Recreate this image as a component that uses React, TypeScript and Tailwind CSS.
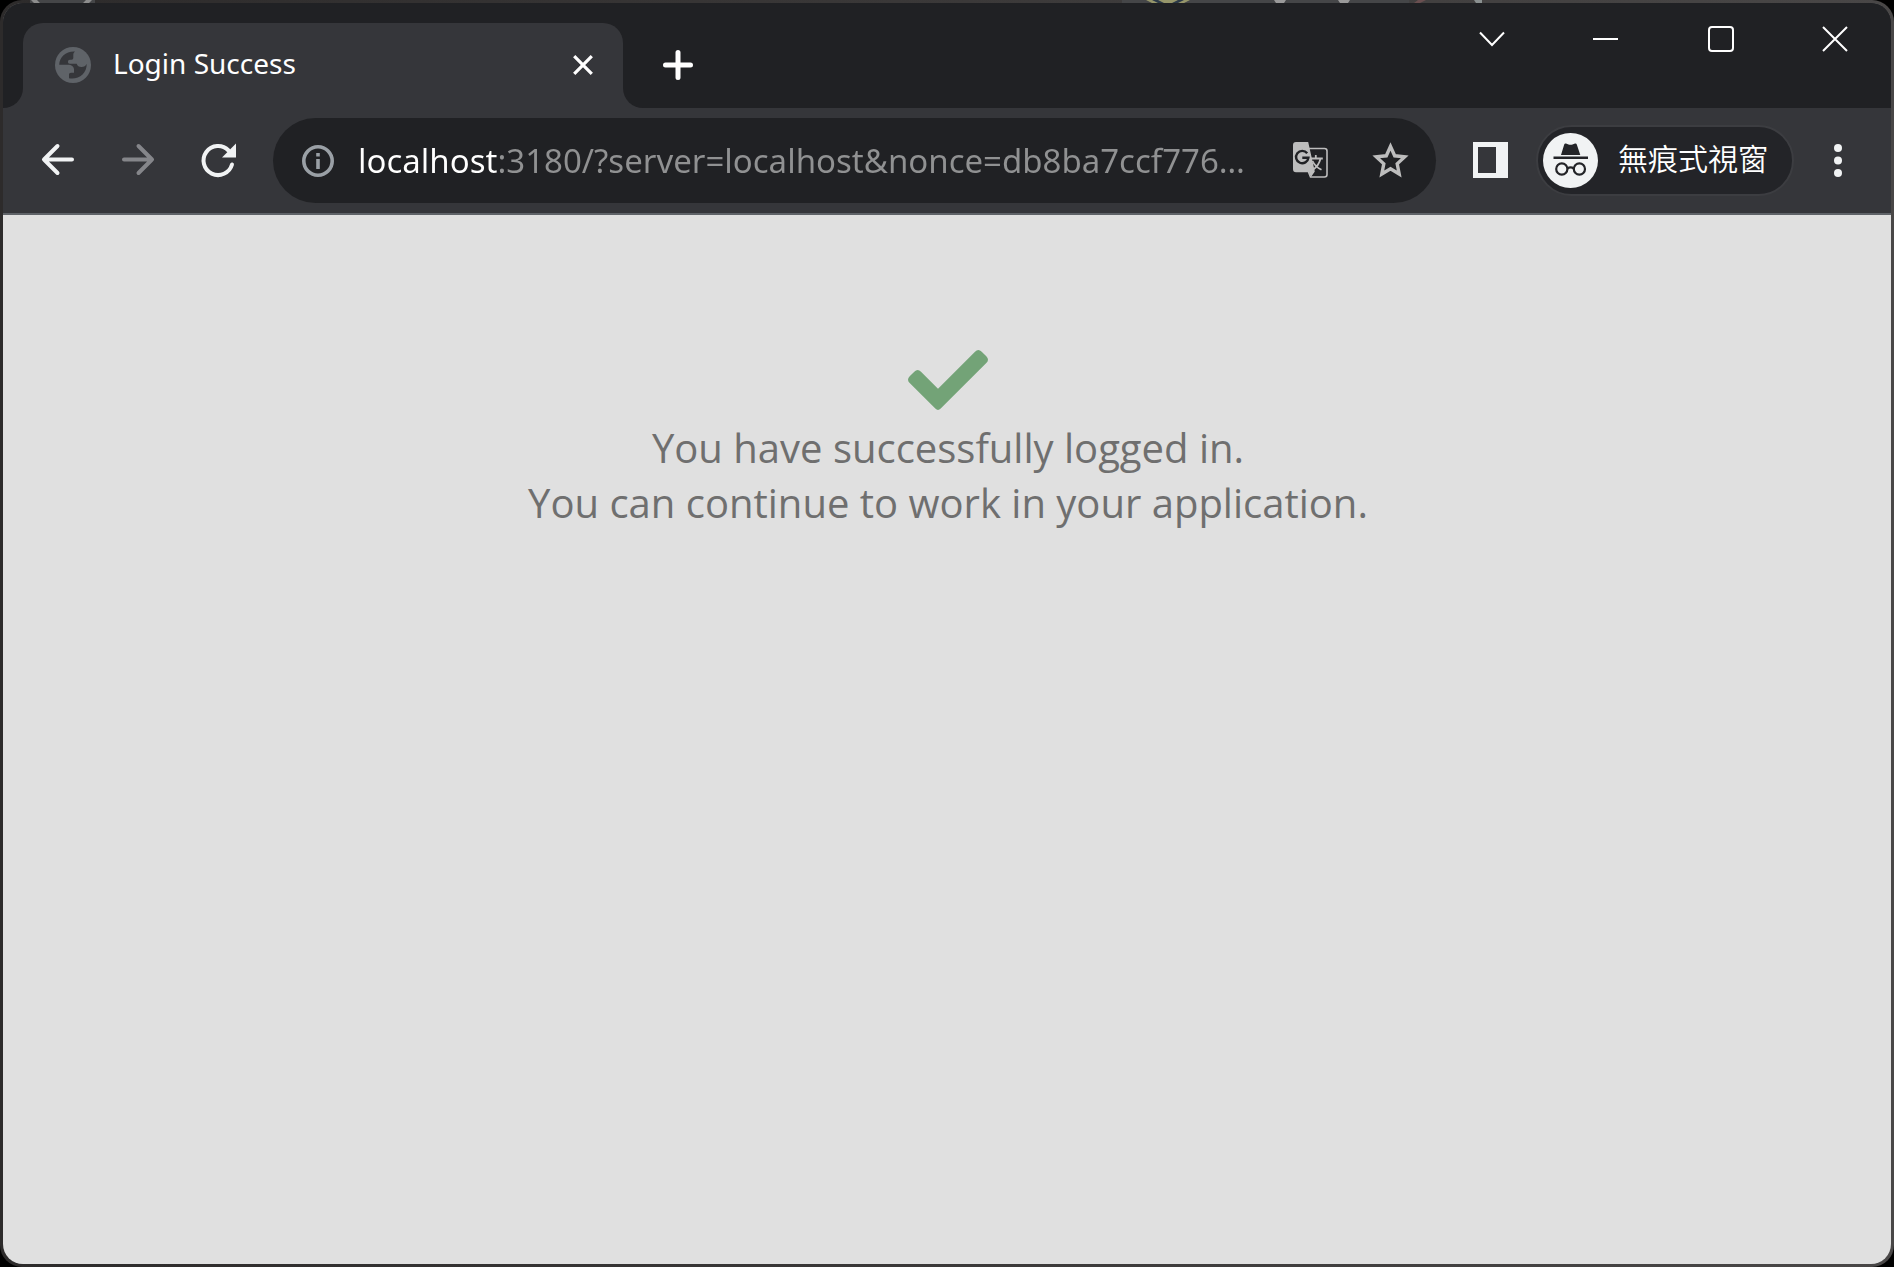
import React from "react";

function TabStrip() {
  return (
    <header className="flex h-[105px] items-end bg-[#202124]">
      <div className="flex h-full w-5 shrink-0 items-end bg-[#35363a]">
        <div className="h-full w-full rounded-br-[20px] bg-[#202124]" />
      </div>
      <div role="tablist" className="flex h-[85px] w-[600px] shrink-0 items-center rounded-t-[20px] bg-[#35363a] pr-[27px] pb-px pl-8">
        <svg aria-hidden="true" className="size-9 shrink-0" viewBox="0 0 36 36">
          <circle cx="18" cy="18" r="18" fill="#5f6368" />
          <path
            d="M20 4.500C11 4 4.500 10 4.200 17.800H13c3.400 0 6 2 6 4.700v3.300h-3c-1.300 0-2 .8-2 2v3.500c9.500 1.800 18-5 17.700-14.600-1 2.200-2.700 3.300-5.200 3.300-2.700 0-4-1.200-4.800-3.300H15c-1.600 0-2-.8-2-2s.6-2 2-2h1.500c1.300 0 1.800-.8 1.800-2V7.800c0-1.500.6-2.500 1.700-3.300z"
            fill="#35363a"
          />
        </svg>
        <button role="tab" aria-selected="true" className="ml-[22px] flex-1 pb-1 text-left font-['Noto_Sans'] text-[28px] leading-9 text-white">
          Login Success
        </button>
        <button aria-label="Close tab" className="flex size-[26px] items-center justify-center text-white">
          <svg aria-hidden="true" className="size-5" viewBox="0 0 20 20" fill="none" stroke="currentColor" strokeWidth="3.200">
            <path d="M1.200 1.200l17.600 17.600M18.800 1.200L1.200 18.800" />
          </svg>
        </button>
      </div>
      <div className="flex h-full flex-1 bg-[#35363a]">
        <div className="flex flex-1 items-end rounded-bl-[20px] bg-[#202124]">
          <button aria-label="New tab" className="ml-[30px] flex h-[85px] w-[50px] items-center justify-center pb-px text-white">
            <svg aria-hidden="true" className="size-[30px]" viewBox="0 0 30 30" fill="none" stroke="currentColor" strokeWidth="5" strokeLinecap="round">
              <path d="M15 2.500v25M2.500 15h25" />
            </svg>
          </button>
          <div className="ml-auto flex self-start text-white">
            <button aria-label="Search tabs" className="flex h-[72px] w-[114px] items-center justify-center">
              <svg aria-hidden="true" className="size-[26px]" viewBox="0 0 26 26" fill="none" stroke="currentColor" strokeWidth="2">
                <path d="M1 6.500l12 12.500 12-12.500" />
              </svg>
            </button>
            <button aria-label="Minimize" className="flex h-[72px] w-[114px] items-center justify-center">
              <svg aria-hidden="true" className="size-[26px]" viewBox="0 0 26 26" fill="currentColor">
                <path d="M0 12h25v2H0z" />
              </svg>
            </button>
            <button aria-label="Maximize" className="flex h-[72px] w-[116px] items-center justify-center">
              <svg aria-hidden="true" className="size-[26px]" viewBox="0 0 26 26" fill="none" stroke="currentColor" strokeWidth="2">
                <rect x="1" y="1" width="24" height="24" rx="3" />
              </svg>
            </button>
            <button aria-label="Close" className="flex h-[72px] w-[112px] items-center justify-center">
              <svg aria-hidden="true" className="size-[26px]" viewBox="0 0 26 26" fill="none" stroke="currentColor" strokeWidth="2">
                <path d="M1 1l24 24M25 1L1 25" />
              </svg>
            </button>
          </div>
        </div>
      </div>
    </header>
  );
}

function TranslateIcon() {
  return (
    <svg aria-hidden="true" className="h-9 w-[35px]" viewBox="0 0 35 36">
      <path d="M14 6.500h17.500a2.500 2.500 0 0 1 2.500 2.500v23.500a2.500 2.500 0 0 1-2.500 2.500H17.500l-2-5" fill="none" stroke="#bdbdbd" strokeWidth="1.600" />
      <path d="M3 0h12.200l6.600 29.500-3.800 5.500-2-4.700H3a3 3 0 0 1-3-3V3a3 3 0 0 1 3-3z" fill="#bdbdbd" />
      <path d="M14.200 11.300a6.200 6.200 0 1 0 1.200 4.500H9.300" fill="none" stroke="#202124" strokeWidth="2.400" />
      <path d="M17.500 16.500h12.300M22.800 13v3.500M19.500 19c1.800 4 4.800 6.800 9 8.800M27.500 16.800c-1.200 4.600-3.500 8.200-7.200 10.700" fill="none" stroke="#bdbdbd" strokeWidth="1.800" />
    </svg>
  );
}

function Toolbar() {
  return (
    <div className="flex h-[107px] items-center border-b-2 border-[#5f6368] bg-[#35363a] pr-[37px] pl-[35px]">
      <nav aria-label="History" className="flex shrink-0 gap-10 pb-px text-[#f1f3f4]">
        <button aria-label="Back" className="size-10">
          <svg aria-hidden="true" className="size-10" viewBox="0 0 40 40" fill="none" stroke="currentColor" strokeWidth="4" strokeLinecap="round" strokeLinejoin="round">
            <path d="M34 19.500H6M19.500 6L6 19.500 19.500 33" />
          </svg>
        </button>
        <button aria-label="Forward" className="size-10 text-[#85868a]">
          <svg aria-hidden="true" className="size-10" viewBox="0 0 40 40" fill="none" stroke="currentColor" strokeWidth="4" strokeLinecap="round" strokeLinejoin="round">
            <path d="M6 19.500h28M20.500 6L34 19.500 20.500 33" />
          </svg>
        </button>
        <button aria-label="Reload" className="size-10">
          <svg aria-hidden="true" className="size-10" viewBox="0 0 40 40">
            <path d="M30.500 10.500A14.500 14.500 0 1 0 34 24.500" fill="none" stroke="currentColor" strokeWidth="4" strokeLinecap="round" />
            <path d="M38 3.500v14H24z" fill="currentColor" />
          </svg>
        </button>
      </nav>
      <div className="ml-[35px] flex h-[85px] flex-1 items-center rounded-full bg-[#202124] pr-[27px] pl-[29px]">
        <button aria-label="View site information" className="size-8 shrink-0">
          <svg aria-hidden="true" className="size-8" viewBox="0 0 32 32" fill="none" stroke="#9aa0a6" strokeWidth="3.600">
            <circle cx="16" cy="16" r="14.200" />
            <path d="M16 14v10M16 8v3.600" />
          </svg>
        </button>
        <input
          aria-label="Address and search bar"
          readOnly
          value="localhost:3180/?server=localhost&nonce=db8ba7ccf776…"
          className="ml-6 h-12 min-w-0 flex-1 bg-[linear-gradient(90deg,#fff_139px,#909192_139px)] bg-clip-text font-['Noto_Sans'] text-[33px] text-transparent outline-none"
        />
        <button aria-label="Translate this page" className="ml-4 shrink-0 pb-px">
          <TranslateIcon />
        </button>
        <button aria-label="Bookmark this tab" className="ml-11 shrink-0 pb-px">
          <svg aria-hidden="true" className="h-9 w-[37px]" viewBox="0 0 37 36" fill="none" stroke="#bdbdbd" strokeWidth="3.400">
            <path d="M18.500 4.500l4.200 9.300 10 1.100-7.500 6.900 2 10.200-8.700-5.200L9.800 32l2-10.200-7.500-6.900 10-1.100z" />
          </svg>
        </button>
      </div>
      <button aria-label="Show side panel" className="ml-[37px] shrink-0 pb-px">
        <svg aria-hidden="true" className="h-9 w-[35px]" viewBox="0 0 35 36">
          <path fillRule="evenodd" d="M0 0h35v36H0zM5 5v26h18V5z" fill="#f1f3f4" />
        </svg>
      </button>
      <button className="ml-7 flex h-[71px] shrink-0 items-center rounded-full border-2 border-[#3c3d41] bg-[#232428] pr-6 pl-[5px] text-white">
        <svg aria-hidden="true" className="size-[55px]" viewBox="0 0 55 55">
          <circle cx="27.500" cy="27.500" r="27.500" fill="#f1f3f4" />
          <path d="M10.500 23.500h34.500v2.500H10.500z" fill="#232428" />
          <path d="M18 22l3.200-10.600c.3-.9 1-1.200 1.800-.9l2.500.9c1 .3 3 .3 4 0l2.500-.9c.8-.3 1.500 0 1.800.9L37.300 22z" fill="#232428" />
          <g fill="none" stroke="#232428" strokeWidth="2.200">
            <circle cx="18.800" cy="36" r="5.600" />
            <circle cx="36.400" cy="36" r="5.600" />
            <path d="M24.400 35.500c2-1.300 4.400-1.300 6.400 0" />
          </g>
        </svg>
        <span className="ml-5 pb-2 font-['Noto_Sans_CJK_TC',sans-serif] text-[30px] leading-10 font-[350]">無痕式視窗</span>
      </button>
      <button aria-label="Menu" className="ml-7 flex h-10 w-8 shrink-0 items-center justify-center">
        <svg aria-hidden="true" className="h-[34px] w-2" viewBox="0 0 8 34" fill="#f1f3f4">
          <circle cx="4" cy="4" r="4" />
          <circle cx="4" cy="16.500" r="4" />
          <circle cx="4" cy="29" r="4" />
        </svg>
      </button>
    </div>
  );
}

export default function App() {
  return (
    <div className="relative flex min-h-screen bg-black">
      <div className="flex flex-1 rounded-[22px] bg-linear-to-r from-[#2d2b2b] to-[#494747] p-[3px]">
        <div className="flex flex-1 flex-col overflow-hidden rounded-[20px] bg-[#e0e0e0]">
          <TabStrip />
          <Toolbar />
          <main className="flex flex-1 flex-col items-center pt-[135px] pr-4 pl-[18px]">
            <svg aria-hidden="true" className="h-[60px] w-20" viewBox="0 0 80 60">
              <path
                d="M27.300 58.600L1.700 33Q-1.700 29.700 1.700 26.300L6.300 21.700Q9.700 18.300 13 21.700L30 38.700 67 1.700Q70.300-1.700 73.700 1.700L78.300 6.300Q81.700 9.700 78.300 13L32.700 58.600Q30 61.400 27.300 58.600z"
                fill="#73a377"
              />
            </svg>
            <p className="mt-[10px] text-center font-['Open_Sans'] text-[40px] leading-[55px] text-[#6f6f6f]">
              You have successfully logged in.
              <br />
              You can continue to work in your application.
            </p>
          </main>
        </div>
      </div>
      <svg aria-hidden="true" className="absolute top-0 left-[1122px] h-[3px] w-[440px]" viewBox="0 0 440 3">
        <path d="M0 0h287v3H0z" fill="#454648" />
        <path d="M24 0h44l-6 3H30z" fill="#96966a" />
        <path d="M30 0h6l6 3h-6zM56 0h6l-6 3h-6z" fill="#2c3a48" />
        <path d="M152 0h12l-2 3h-8zM216 0h12l-2 3h-8z" fill="#9a9a9a" />
        <path d="M296 0h8l-6 3h-6z" fill="#6a4f50" />
        <path d="M352 0h8v3h-6z" fill="#8a9090" />
      </svg>
      <svg aria-hidden="true" className="absolute top-0 left-[30px] h-[3px] w-[65px]" viewBox="0 0 65 3">
        <path d="M0 0h65v3H0z" fill="#454648" />
        <path d="M1 0h6l3 3H4zM56 0h6l-3 3h-6z" fill="#8d8d8d" />
      </svg>
    </div>
  );
}
